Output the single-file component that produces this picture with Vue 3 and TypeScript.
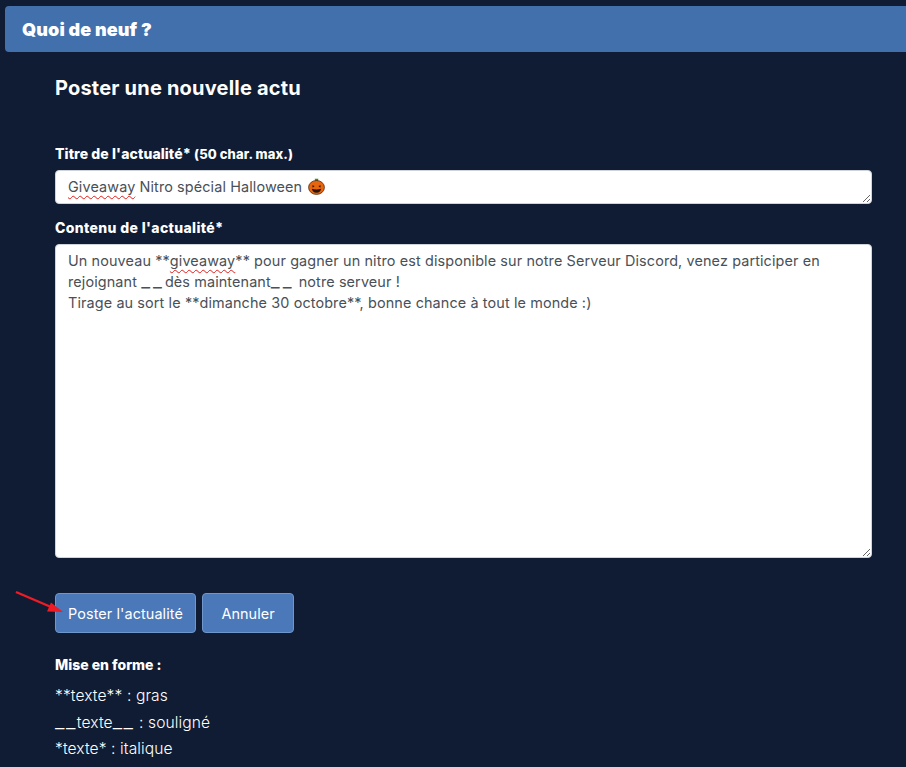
<script setup lang="ts">
import { ref } from 'vue'

const title = ref("Nitro spécial Halloween")
</script>

<template>
  <div class="page">
    <header class="banner">
      <h1>Quoi de neuf ?</h1>
    </header>

    <main class="content">
      <h2>Poster une nouvelle actu</h2>

      <form class="news-form" @submit.prevent>
        <label class="field-label first">Titre de l'actualité* <span class="hint">(50 char. max.)</span></label>
        <div class="field title-field">
          <span class="typo">Giveaway</span> {{ title }}
          <svg class="pumpkin" viewBox="0 0 18 18" width="17" height="17" aria-hidden="true">
            <path d="M8 3.5 L7 .8 L11 .8 L10.4 3.5 Z" fill="#3f8a2a" />
            <ellipse cx="9" cy="10" rx="8.4" ry="7.4" fill="#e8650f" stroke="#4a2408" stroke-width=".8" />
            <path d="M4.5 7.8 L7 8.6 L5 10.4 Z M13.5 7.8 L11 8.6 L13 10.4 Z" fill="#2a1405" />
            <path d="M4 11.4 Q9 13 14 11.4 Q13 15.6 9 15.6 Q5 15.6 4 11.4 Z" fill="#2a1405" />
          </svg>
        </div>

        <label class="field-label">Contenu de l'actualité*</label>
        <div class="field body-field">Un nouveau **<span class="typo">giveaway</span>** pour gagner un nitro est disponible sur notre Serveur Discord, venez participer en rejoignant <span class="us">__</span>dès maintenant<span class="us">__</span> notre serveur !<br />Tirage au sort le **dimanche 30 octobre**, bonne chance à tout le monde :)</div>

        <div class="actions">
          <svg class="arrow" viewBox="0 0 50 30" width="50" height="30" aria-hidden="true">
            <path d="M1 2 L36 17" stroke="#ee1c25" stroke-width="2.4" fill="none" />
            <path d="M48 22 L32 21.5 L36 12.5 Z" fill="#ee1c25" />
          </svg>
          <button class="btn" type="submit">Poster l'actualité</button>
          <button class="btn" type="button">Annuler</button>
        </div>
      </form>

      <p class="format-title">Mise en forme :</p>
      <p class="format-line">**texte** : gras</p>
      <p class="format-line"><span class="us">__</span>texte<span class="us">__</span> : souligné</p>
      <p class="format-line">*texte* : italique</p>
    </main>
  </div>
</template>

<style scoped>
.page {
  height: 767px;
  overflow: hidden;
  padding-top: 6px;
  box-sizing: border-box;
  background: #0f1c33;
  color: #fff;
  font-family: Inter, "Noto Sans", sans-serif;
}

.banner {
  margin-left: 5px;
  height: 46px;
  padding-left: 17px;
  display: flex;
  align-items: center;
  background: #4270ad;
  border-radius: 4px 0 0 4px;
}

.banner h1 {
  margin: 0;
  font-size: 18px;
  font-weight: 900;
  letter-spacing: 0.1px;
}

.content {
  padding: 0 34px 0 55px;
}

.content h2 {
  margin: 24px 0 0;
  font-size: 20px;
  line-height: 24px;
  font-weight: 700;
  letter-spacing: 0.2px;
}

.field-label {
  display: block;
  font-size: 14px;
  line-height: 20px;
  font-weight: 800;
  letter-spacing: 0.35px;
  margin: 14px 0 6px;
}

.field-label.first {
  margin-top: 44px;
  letter-spacing: 0.1px;
}

.hint {
  font-size: 13px;
}

.field {
  box-sizing: border-box;
  background: #fff;
  border: 1px solid #ced4da;
  border-radius: 4px;
  color: #495057;
  font-size: 14.4px;
  line-height: 21px;
  letter-spacing: 0.12px;
  padding: 5px 12px;
  overflow: hidden;
  resize: vertical;
}

.title-field {
  height: 34px;
}

.body-field {
  height: 314px;
}

.typo {
  text-decoration: underline wavy #e0201c 1px;
  text-underline-offset: 3px;
}

.us {
  font-size: 1.35em;
  line-height: 0;
  letter-spacing: 3px;
}

.format-line .us {
  letter-spacing: 1.5px;
}

.pumpkin {
  vertical-align: -3px;
  margin-left: 2px;
}

.actions {
  position: relative;
  display: flex;
  gap: 6px;
  margin-top: 35px;
}

.arrow {
  position: absolute;
  left: -40px;
  top: -3px;
  z-index: 1;
}

.btn {
  height: 40px;
  padding: 0 12px;
  background: #4a78b8;
  border: 1px solid #6f97cc;
  border-radius: 4px;
  color: #fff;
  font-family: inherit;
  font-size: 14.4px;
  letter-spacing: 0.1px;
}

.actions .btn:last-child {
  padding: 0 18.5px;
}

.format-title {
  margin: 22px 0 8px;
  font-size: 14px;
  line-height: 20px;
  font-weight: 800;
}

.format-line {
  margin: 0;
  font-size: 15.6px;
  line-height: 26.5px;
  font-weight: 300;
  letter-spacing: 0.1px;
}
</style>
